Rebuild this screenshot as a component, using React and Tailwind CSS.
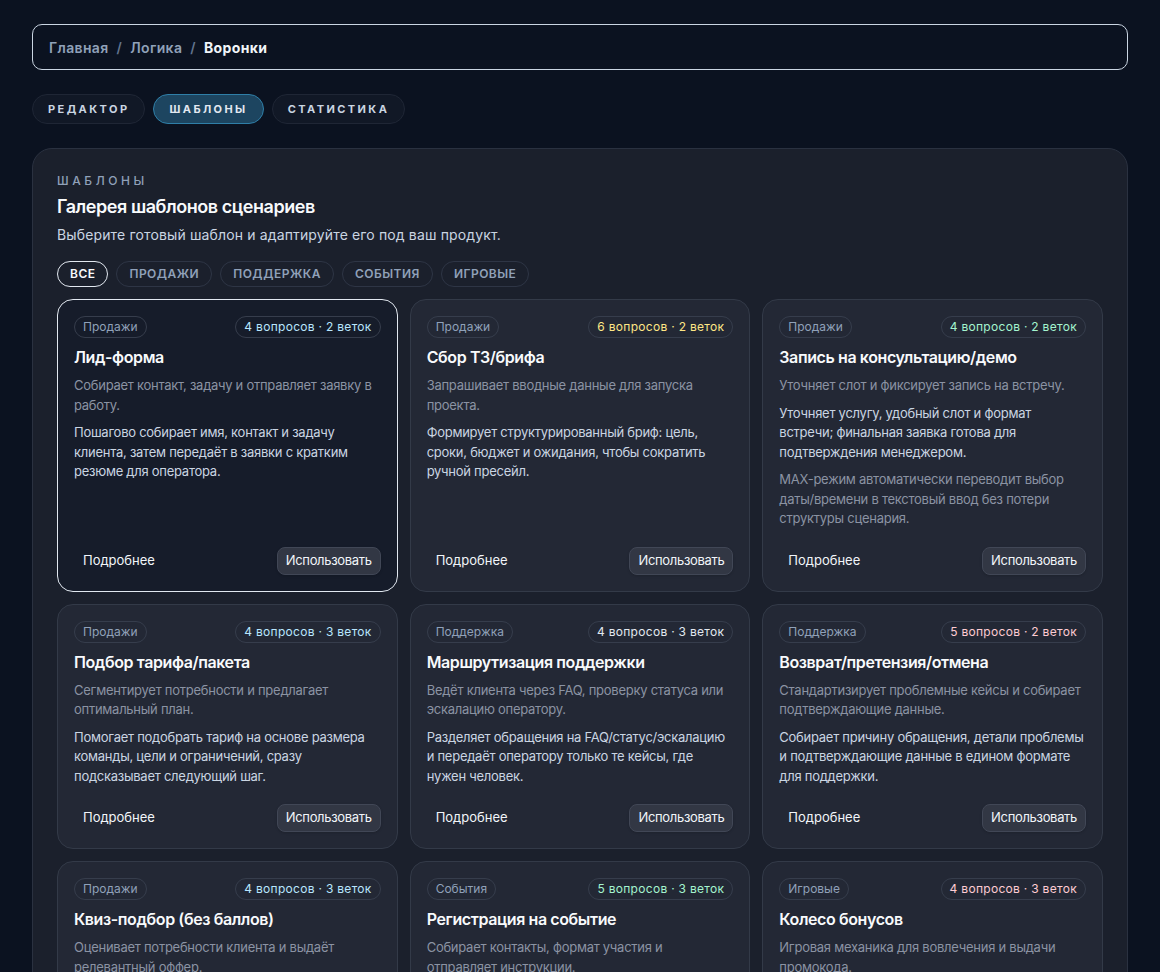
import { useState } from 'react';

const TEMPLATES = [
  {
    category: 'Продажи',
    stats: '4 вопросов · 2 веток',
    tone: 'text-sky-200',
    title: 'Лид-форма',
    summary: 'Собирает контакт, задачу и отправляет заявку в работу.',
    body: 'Пошагово собирает имя, контакт и задачу клиента, затем передаёт в заявки с кратким резюме для оператора.',
  },
  {
    category: 'Продажи',
    stats: '6 вопросов · 2 веток',
    tone: 'text-amber-200',
    title: 'Сбор ТЗ/брифа',
    summary: 'Запрашивает вводные данные для запуска проекта.',
    body: 'Формирует структурированный бриф: цель, сроки, бюджет и ожидания, чтобы сократить ручной пресейл.',
  },
  {
    category: 'Продажи',
    stats: '4 вопросов · 2 веток',
    tone: 'text-emerald-200',
    title: 'Запись на консультацию/демо',
    summary: 'Уточняет слот и фиксирует запись на встречу.',
    body: 'Уточняет услугу, удобный слот и формат встречи; финальная заявка готова для подтверждения менеджером.',
    note: 'MAX-режим автоматически переводит выбор даты/времени в текстовый ввод без потери структуры сценария.',
  },
  {
    category: 'Продажи',
    stats: '4 вопросов · 3 веток',
    tone: 'text-sky-200',
    title: 'Подбор тарифа/пакета',
    summary: 'Сегментирует потребности и предлагает оптимальный план.',
    body: 'Помогает подобрать тариф на основе размера команды, цели и ограничений, сразу подсказывает следующий шаг.',
  },
  {
    category: 'Поддержка',
    stats: '4 вопросов · 3 веток',
    tone: 'text-slate-200',
    title: 'Маршрутизация поддержки',
    summary: 'Ведёт клиента через FAQ, проверку статуса или эскалацию оператору.',
    body: 'Разделяет обращения на FAQ/статус/эскалацию и передаёт оператору только те кейсы, где нужен человек.',
  },
  {
    category: 'Поддержка',
    stats: '5 вопросов · 2 веток',
    tone: 'text-rose-200',
    title: 'Возврат/претензия/отмена',
    summary: 'Стандартизирует проблемные кейсы и собирает подтверждающие данные.',
    body: 'Собирает причину обращения, детали проблемы и подтверждающие данные в едином формате для поддержки.',
  },
  {
    category: 'Продажи',
    stats: '4 вопросов · 3 веток',
    tone: 'text-sky-200',
    title: 'Квиз-подбор (без баллов)',
    summary: 'Оценивает потребности клиента и выдаёт релевантный оффер.',
    body: 'Несколько коротких вопросов помогают понять задачу и предложить подходящий вариант без подсчёта баллов.',
  },
  {
    category: 'События',
    stats: '5 вопросов · 3 веток',
    tone: 'text-emerald-200',
    title: 'Регистрация на событие',
    summary: 'Собирает контакты, формат участия и отправляет инструкции.',
    body: 'Регистрирует участника, уточняет формат участия и отправляет памятку с деталями события.',
  },
  {
    category: 'Игровые',
    stats: '4 вопросов · 3 веток',
    tone: 'text-rose-200',
    title: 'Колесо бонусов',
    summary: 'Игровая механика для вовлечения и выдачи промокода.',
    body: 'Клиент крутит колесо, получает бонус и оставляет контакт для активации промокода.',
  },
];

const FILTERS = ['Все', 'Продажи', 'Поддержка', 'События', 'Игровые'];
const TABS = ['Редактор', 'Шаблоны', 'Статистика'];

function TemplateCard({ item, selected }) {
  return (
    <div
      className={`flex flex-col rounded-2xl border p-4 ${
        selected
          ? 'border-slate-200 bg-[#161c2a]'
          : 'border-[#333a48] bg-[#232835]'
      }`}
    >
      <div className="flex items-center justify-between">
        <span className="h-[22px] rounded-full border border-[#363d4c] px-2 text-[12px] leading-[20px] text-slate-400">
          {item.category}
        </span>
        <span
          className={`h-[22px] rounded-full border border-[#363d4c] px-2 text-[12px] leading-[20px] tracking-wide ${item.tone}`}
        >
          {item.stats}
        </span>
      </div>
      <h3 className="mt-[7px] text-[16px] font-semibold leading-6 tracking-tight text-slate-50">
        {item.title}
      </h3>
      <p className="mt-[7px] text-[13px] leading-[19.5px] tracking-[-0.02em] text-[#8b93a3]">
        {item.summary}
      </p>
      <p className="mt-2 text-[13px] leading-[19.5px] tracking-[-0.02em] text-slate-300">
        {item.body}
      </p>
      {item.note && (
        <p className="mt-2 text-[13px] leading-[19.5px] tracking-[-0.02em] text-[#8b93a3]">
          {item.note}
        </p>
      )}
      <div className="mt-auto flex items-center justify-between pt-[18px]">
        <button className="h-7 rounded-lg border border-transparent px-2 text-[13px] text-slate-100">
          Подробнее
        </button>
        <button className="h-7 rounded-lg border border-[#414756] bg-[#323744] px-2 text-[13px] tracking-tight text-slate-100 shadow-sm">
          Использовать
        </button>
      </div>
    </div>
  );
}

export default function App() {
  const [tab, setTab] = useState('Шаблоны');
  const [filter, setFilter] = useState('Все');

  return (
    <div
      className="min-h-screen bg-[#0b1220] px-8 pt-6 pb-10"
      style={{ fontFamily: 'Inter, "Noto Sans", sans-serif' }}
    >
      {/* Breadcrumbs */}
      <div className="flex h-[46px] items-center gap-2 rounded-[10px] border border-slate-300 px-4 text-[14px] font-semibold tracking-wide">
        <span className="text-slate-400">Главная</span>
        <span className="text-slate-500">/</span>
        <span className="text-slate-400">Логика</span>
        <span className="text-slate-500">/</span>
        <span className="font-bold text-slate-100">Воронки</span>
      </div>

      {/* Tabs */}
      <div className="mt-6 flex gap-2">
        {TABS.map((t) => (
          <button
            key={t}
            onClick={() => setTab(t)}
            className={`h-[30px] rounded-full border px-[15px] text-[11px] font-bold uppercase tracking-[0.22em] ${
              tab === t
                ? 'border-[#2f7fa8] bg-[#1d4560] text-slate-200'
                : 'border-[#1f2635] bg-[#111826] text-slate-300'
            }`}
          >
            {t}
          </button>
        ))}
      </div>

      {/* Panel */}
      <div className="mt-6 rounded-[20px] border border-[#2a3140] bg-[#1b202c] p-6">
        <div className="text-[12px] font-medium uppercase leading-4 tracking-[0.3em] text-slate-400">
          Шаблоны
        </div>
        <h2 className="mt-1 text-[18px] font-semibold leading-7 tracking-tight text-slate-50">
          Галерея шаблонов сценариев
        </h2>
        <p className="mt-1 text-[14px] leading-5 tracking-[0.01em] text-slate-300">
          Выберите готовый шаблон и адаптируйте его под ваш продукт.
        </p>

        <div className="mt-4 flex gap-2">
          {FILTERS.map((f) => (
            <button
              key={f}
              onClick={() => setFilter(f)}
              className={`h-[26px] rounded-full border px-3 text-[12px] font-semibold uppercase tracking-[0.04em] ${
                filter === f
                  ? 'border-slate-200 text-slate-50'
                  : 'border-[#2e3545] text-slate-400'
              }`}
            >
              {f}
            </button>
          ))}
        </div>

        <div className="mt-3 grid grid-cols-3 gap-3">
          {TEMPLATES.map((item, i) => (
            <TemplateCard key={item.title} item={item} selected={i === 0} />
          ))}
        </div>
      </div>
    </div>
  );
}
